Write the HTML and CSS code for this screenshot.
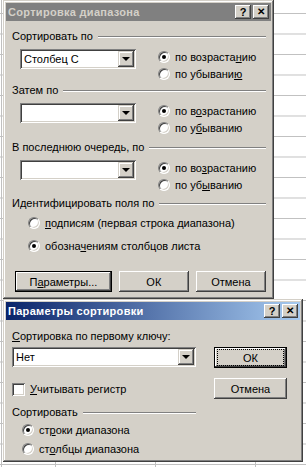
FILE: index.html
```html
<!DOCTYPE html>
<html>
<head>
<meta charset="utf-8">
<link rel="stylesheet" href="styles.css">
</head>
<body>
<div class="desk">
  <div class="win win1">
    <div class="title inactive">
      <span class="ttext">Сортировка диапазона</span>
      <div class="tbtns"><span class="tb">?</span><span class="tb x">✕</span></div>
    </div>
    <div class="client c1">
      <div class="ghead g1"><span>Сортировать по</span><i class="etch"></i></div>
      <div class="grow r1">
        <div class="combo"><span class="val">Столбец C</span><span class="drop"><b></b></span></div>
        <div class="radios">
          <div class="radio on"><span class="rc"></span><span>по возраста<u>н</u>ию</span></div>
          <div class="radio"><span class="rc"></span><span>по убывани<u>ю</u></span></div>
        </div>
      </div>
      <div class="ghead"><span>Затем по</span><i class="etch"></i></div>
      <div class="grow r2">
        <div class="combo"><span class="val"></span><span class="drop"><b></b></span></div>
        <div class="radios">
          <div class="radio on"><span class="rc"></span><span>по в<u>о</u>зрастанию</span></div>
          <div class="radio"><span class="rc"></span><span>по у<u>б</u>ыванию</span></div>
        </div>
      </div>
      <div class="ghead"><span>В последнюю очередь, по</span><i class="etch"></i></div>
      <div class="grow r3">
        <div class="combo"><span class="val"></span><span class="drop"><b></b></span></div>
        <div class="radios">
          <div class="radio on"><span class="rc"></span><span>по во<u>з</u>растанию</span></div>
          <div class="radio"><span class="rc"></span><span>по уб<u>ы</u>ванию</span></div>
        </div>
      </div>
      <div class="ghead"><span>Идентифицировать поля по</span><i class="etch"></i></div>
      <div class="idradios">
        <div class="radio"><span class="rc"></span><span><u>п</u>одписям (первая строка диапазона)</span></div>
        <div class="radio on"><span class="rc"></span><span>обозна<u>ч</u>ениям столбцов листа</span></div>
      </div>
      <div class="btnrow">
        <div class="btn def">П<u>а</u>раметры...</div>
        <div class="btn">ОК</div>
        <div class="btn">Отмена</div>
      </div>
    </div>
  </div>
  <div class="win win2">
    <div class="title active">
      <span class="ttext">Параметры сортировки</span>
      <div class="tbtns"><span class="tb">?</span><span class="tb x">✕</span></div>
    </div>
    <div class="client c2">
      <div class="cols">
        <div class="left2">
          <div class="lbl"><u>С</u>ортировка по первому ключу:</div>
          <div class="combo wide"><span class="val">Нет</span><span class="drop"><b></b></span></div>
          <div class="check"><span class="cb"></span><span><u>У</u>читывать регистр</span></div>
          <div class="ghead g2"><span>Сортировать</span><i class="etch"></i></div>
          <div class="sradios">
            <div class="radio on"><span class="rc"></span><span>ст<u>р</u>оки диапазона</span></div>
            <div class="radio"><span class="rc"></span><span>ст<u>о</u>лбцы диапазона</span></div>
          </div>
        </div>
        <div class="right2">
          <div class="btn def focus">ОК</div>
          <div class="btn">Отмена</div>
        </div>
      </div>
    </div>
  </div>
</div>
</body>
</html>
```
FILE: styles.css
```css
html, body {
  margin: 0;
  padding: 0;
}
body {
  width: 306px;
  height: 467px;
  overflow: hidden;
  background-color: #fff;
  background-image:
    linear-gradient(to right, #c0c0c0 1px, transparent 1px),
    linear-gradient(to right, #c0c0c0 1px, transparent 1px),
    linear-gradient(to bottom, #c0c0c0 1px, transparent 1px);
  background-size: 100px 100%, 306px 100%, 100% 20.5px;
  background-position: 55px 0, 1px 0, 0 13px;
  background-repeat: repeat-x, no-repeat, repeat-y;
  font-family: "Liberation Sans", Arial, sans-serif;
  font-size: 11px;
  color: #000;
}
.desk {
  display: flex;
  flex-direction: column;
  align-items: flex-start;
  padding-left: 3px;
}
.win {
  background: #d4d0c8;
  padding: 3px;
  box-shadow:
    inset -1px -1px 0 #404040,
    inset 1px 1px 0 #d4d0c8,
    inset -2px -2px 0 #808080,
    inset 2px 2px 0 #fff;
  box-sizing: border-box;
}
.win1 {
  width: 271px;
  height: 299px;
}
.win2 {
  width: 300px;
  height: 163px;
}
.title {
  height: 18px;
  display: flex;
  align-items: center;
  justify-content: space-between;
  padding-left: 2px;
  padding-right: 2px;
  font-weight: bold;
  font-size: 11px;
  letter-spacing: 0.3px;
}
.title.inactive {
  background: #808080;
  color: #d4d0c8;
}
.title.active {
  background: linear-gradient(to right, #0a246a, #a6caf0);
  color: #fff;
}
.tbtns {
  display: flex;
  gap: 2px;
  letter-spacing: 0;
}
.tb {
  width: 16px;
  height: 14px;
  box-sizing: border-box;
  background: #d4d0c8;
  color: #000;
  font-weight: bold;
  font-size: 11px;
  line-height: 14px;
  text-align: center;
  box-shadow:
    inset -1px -1px 0 #404040,
    inset 1px 1px 0 #fff,
    inset -2px -2px 0 #808080;
}
.tb.x {
  font-size: 10px;
}
.client {
  display: flex;
  flex-direction: column;
}
.c1 {
  padding: 9px 5px 0 6px;
}
.ghead {
  display: flex;
  align-items: center;
  gap: 5px;
  height: 13px;
  line-height: 13px;
}
.etch {
  flex: 1;
  height: 0;
  border-top: 1px solid #808080;
  border-bottom: 1px solid #fff;
}
.grow {
  display: flex;
  margin: 6px 0 5px 0;
}
.grow.r1 {
  margin-bottom: 3px;
}
.grow.r2 {
  margin-bottom: 6px;
}
.combo {
  width: 116px;
  height: 20px;
  box-sizing: border-box;
  margin-left: 8px;
  background: #fff;
  display: flex;
  align-items: center;
  justify-content: space-between;
  padding: 2px;
  box-shadow:
    inset 1px 1px 0 #808080,
    inset -1px -1px 0 #fff,
    inset 2px 2px 0 #404040,
    inset -2px -2px 0 #d4d0c8;
}
.combo .val {
  padding-left: 2px;
}
.drop {
  width: 16px;
  height: 16px;
  box-sizing: border-box;
  background: #d4d0c8;
  display: flex;
  align-items: center;
  justify-content: center;
  box-shadow:
    inset -1px -1px 0 #404040,
    inset 1px 1px 0 #d4d0c8,
    inset -2px -2px 0 #808080,
    inset 2px 2px 0 #fff;
}
.drop b {
  width: 0;
  height: 0;
  border-left: 4px solid transparent;
  border-right: 4px solid transparent;
  border-top: 4px solid #000;
}
.radios {
  display: flex;
  flex-direction: column;
  margin-left: 22px;
  gap: 2px;
}
.radio {
  display: flex;
  align-items: center;
  gap: 5px;
  height: 15px;
}
.rc {
  width: 12px;
  height: 12px;
  box-sizing: border-box;
  border-radius: 50%;
  background: #fff;
  border: 1px solid;
  border-color: #808080 #fff #fff #808080;
  box-shadow: inset 1px 1px 0 #404040, inset -1px -1px 0 #d4d0c8;
  position: relative;
}
.radio.on .rc::after {
  content: "";
  position: absolute;
  left: 3px;
  top: 3px;
  width: 4px;
  height: 4px;
  border-radius: 50%;
  background: #000;
}
.idradios {
  display: flex;
  flex-direction: column;
  gap: 8px;
  margin: 5px 0 0 16px;
}
.btnrow {
  display: flex;
  gap: 7px;
  margin-top: 18px;
  margin-left: 3px;
}
.btn {
  width: 71px;
  height: 21px;
  box-sizing: border-box;
  display: flex;
  align-items: center;
  justify-content: center;
  background: #d4d0c8;
  position: relative;
  box-shadow:
    inset -1px -1px 0 #404040,
    inset 1px 1px 0 #fff,
    inset -2px -2px 0 #808080;
}
.btn.def {
  width: 98px;
  box-shadow:
    inset 0 0 0 1px #000,
    inset -2px -2px 0 #404040,
    inset 2px 2px 0 #fff,
    inset -3px -3px 0 #808080;
}
.c2 {
  padding: 10px 0 0 6px;
}
.cols {
  display: flex;
}
.left2 {
  width: 184px;
  display: flex;
  flex-direction: column;
}
.lbl {
  height: 13px;
  line-height: 13px;
}
.combo.wide {
  width: 184px;
  margin: 4px 0 0 0;
}
.check {
  display: flex;
  align-items: center;
  gap: 5px;
  margin-top: 15px;
  height: 14px;
}
.cb {
  width: 13px;
  height: 13px;
  box-sizing: border-box;
  background: #fff;
  box-shadow:
    inset 1px 1px 0 #808080,
    inset -1px -1px 0 #fff,
    inset 2px 2px 0 #404040,
    inset -2px -2px 0 #d4d0c8;
}
.g2 {
  margin-top: 10px;
}
.sradios {
  display: flex;
  flex-direction: column;
  gap: 4px;
  margin: 3px 0 0 10px;
}
.right2 {
  display: flex;
  flex-direction: column;
  gap: 10px;
  margin-left: 18px;
  margin-top: 17px;
}
.right2 .btn {
  width: 73px;
}
.btn.focus::after {
  content: "";
  position: absolute;
  left: 4px;
  right: 4px;
  top: 3px;
  bottom: 3px;
  outline: 1px dotted #000;
}
```
